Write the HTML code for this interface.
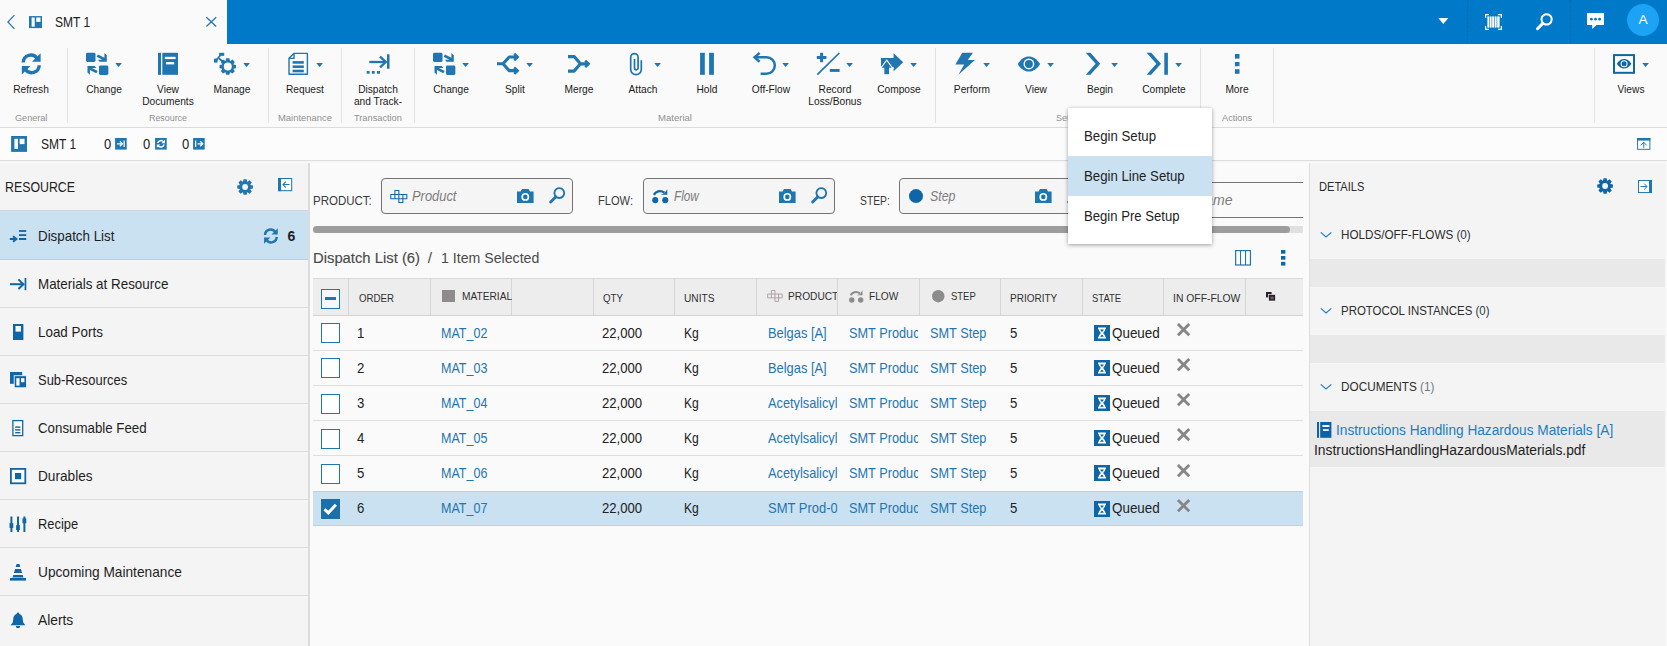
<!DOCTYPE html>
<html><head><meta charset="utf-8"><title>SMT 1</title>
<style>
*{box-sizing:border-box;margin:0;padding:0}
html,body{width:1667px;height:646px;overflow:hidden;background:#fafafa;font-family:"Liberation Sans",sans-serif;color:#222}
.a,.i,.t{position:absolute}
.t{white-space:nowrap;line-height:1}
.i{display:block;overflow:visible;fill:currentColor}
</style></head><body>

<div class="a" style="left:0px;top:0px;width:1667px;height:44px;background:#0079c9;"></div>
<div class="a" style="left:0px;top:0px;width:227px;height:44px;background:#fafafa;"></div>
<svg class="i" style="left:7px;top:14px;width:8.2px;height:16px;color:#1f76b0;" viewBox="0 0 9 16"><path d="M8.2 0.4 L1 8 L8.2 15.6" fill="none" stroke="currentColor" stroke-width="1.3" /></svg>
<svg class="i" style="left:28.8px;top:15.8px;width:13px;height:12.2px;color:#1f76b0;" viewBox="0 0 13 12"><rect x="0" y="0" width="13" height="12" rx="0" /><rect x="2.6" y="1.4" width="3.1" height="9.2" rx="0" fill="#fff"/><rect x="7.2" y="1.4" width="4.3" height="4.4" rx="0" fill="#fff"/></svg>
<div class="t" style="left:55.1px;top:14.98px;font-size:14.2px;color:#222;transform:scaleX(0.849);transform-origin:0 0;">SMT 1</div>
<svg class="i" style="left:205.5px;top:17.2px;width:10.6px;height:9.8px;color:#1f76b0;" viewBox="0 0 11 10"><path d="M0.4 0.2 L10.6 9.8 M10.6 0.2 L0.4 9.8" fill="none" stroke="currentColor" stroke-width="1.3" /></svg>
<svg class="i" style="left:1437.8px;top:17.8px;width:10.6px;height:6px;color:#fff;" viewBox="0 0 10 6"><path d="M0 0 H10 L5 6Z" /></svg>
<div class="a" style="left:1467px;top:0;width:0;height:44px;border-left:1px dotted #0a62a3"></div>
<div class="a" style="left:1570px;top:0;width:0;height:44px;border-left:1px dotted #0a62a3"></div>
<svg class="i" style="left:1485.2px;top:14px;width:17px;height:16px;color:#fff;" viewBox="0 0 17 16"><path d="M0.6 4 V0.6 H4 M13 0.6 H16.4 V4 M16.4 12 V15.4 H13 M4 15.4 H0.6 V12" fill="none" stroke="currentColor" stroke-width="1.2" /><rect x="2.4" y="2.4" width="2" height="11.2" rx="0" /><rect x="5" y="2.4" width="1.6" height="11.2" rx="0" /><rect x="7.2" y="2.4" width="2.2" height="11.2" rx="0" /><rect x="10" y="2.4" width="1.6" height="11.2" rx="0" /><rect x="12.2" y="2.4" width="2.4" height="11.2" rx="0" /></svg>
<svg class="i" style="left:1536px;top:13.4px;width:17px;height:17px;color:#fff;" viewBox="0 0 17 17"><path d="M10.6 1.2 a5.2 5.2 0 1 0 0.01 0Z" fill="none" stroke="currentColor" stroke-width="2" /><path d="M6.8 10.4 L1.5 15.7" fill="none" stroke="currentColor" stroke-width="3" stroke-linecap="round"/></svg>
<svg class="i" style="left:1586.7px;top:13px;width:17px;height:16px;color:#fff;" viewBox="0 0 17 16"><path d="M0 0 H17 V12 H9.5 L5.2 16 V12 H0Z" /><circle cx="4.4" cy="6.2" r="1.4" fill="#0079c9"/><circle cx="8.5" cy="6.2" r="1.4" fill="#0079c9"/><circle cx="12.6" cy="6.2" r="1.4" fill="#0079c9"/></svg>
<div class="a" style="left:1627px;top:3.7px;width:32px;height:32px;background:#1ca3f6;border-radius:50%"></div>
<div class="t" style="left:1638.56px;top:12.99px;font-size:13.6px;color:#fff;">A</div>
<div class="a" style="left:0px;top:44px;width:1667px;height:83px;background:#fafafa;"></div>
<div class="a" style="left:0px;top:127px;width:1667px;height:1px;background:#dcdcdc;"></div>
<div class="a" style="left:67px;top:48px;width:1px;height:75px;background:#e2e2e2;"></div>
<div class="a" style="left:268px;top:48px;width:1px;height:75px;background:#e2e2e2;"></div>
<div class="a" style="left:341px;top:48px;width:1px;height:75px;background:#e2e2e2;"></div>
<div class="a" style="left:414px;top:48px;width:1px;height:75px;background:#e2e2e2;"></div>
<div class="a" style="left:935px;top:48px;width:1px;height:75px;background:#e2e2e2;"></div>
<div class="a" style="left:1200px;top:48px;width:1px;height:75px;background:#e2e2e2;"></div>
<div class="a" style="left:1273px;top:48px;width:1px;height:75px;background:#e2e2e2;"></div>
<div class="a" style="left:1594px;top:48px;width:1px;height:75px;background:#e2e2e2;"></div>
<svg class="i" style="left:19px;top:52px;width:24px;height:24px;color:#1f76b0;" viewBox="0 0 24 24"><path d="M4.2 10.6 A7.6 7.6 0 0 1 18.2 6.6" fill="none" stroke="currentColor" stroke-width="3.3" /><path d="M21.6 1.2 V9.8 H13Z" /><path d="M20.2 13.2 A7.6 7.6 0 0 1 6.2 17.2" fill="none" stroke="currentColor" stroke-width="3.3" /><path d="M2.8 22.6 V14 H11.4Z" /></svg>
<div class="t" style="left:13.14px;top:85.17px;font-size:10.2px;color:#1a1a1a;">Refresh</div>
<svg class="i" style="left:86px;top:52px;width:24px;height:24px;color:#1f76b0;" viewBox="0 0 24 24"><rect x="0" y="0.8" width="9.5" height="9.1" rx="1.4" /><rect x="12.95" y="13.6" width="9.4" height="9.3" rx="1.4" /><path d="M18.40 1.00 L20.80 3.20 L20.80 9.70 L13.60 9.70 L12.00 7.70 L16.40 7.70 L10.60 4.80 L12.00 2.50 L18.40 5.80Z" /><path d="M3.90 22.70 L1.50 20.50 L1.50 14.00 L8.70 14.00 L10.30 16.00 L5.90 16.00 L11.70 18.90 L10.30 21.20 L3.90 17.90Z" /></svg>
<svg class="i" style="left:114.7px;top:63px;width:7.2px;height:4px;color:#1f76b0;" viewBox="0 0 10 6"><path d="M0 0 H10 L5 6Z" /></svg>
<div class="t" style="left:86.13px;top:85.17px;font-size:10.2px;color:#1a1a1a;">Change</div>
<svg class="i" style="left:156px;top:52px;width:24px;height:24px;color:#1f76b0;" viewBox="0 0 24 24"><rect x="2" y="0.8" width="3" height="22" rx="0" /><rect x="6.3" y="0.8" width="15.7" height="22" rx="0" /><rect x="8.8" y="4.8" width="10.8" height="2.3" rx="0" fill="#fff"/><rect x="10" y="10" width="8.2" height="2.4" rx="0" fill="#fff"/></svg>
<div class="t" style="left:157.04px;top:85.17px;font-size:10.2px;color:#1a1a1a;">View</div>
<div class="t" style="left:142.21px;top:97.17px;font-size:10.2px;color:#1a1a1a;">Documents</div>
<svg class="i" style="left:214px;top:52px;width:24px;height:24px;color:#1f76b0;" viewBox="0 0 24 24"><path d="M19.48 12.38 L22.04 12.96 L22.04 16.24 L19.48 16.82 L19.39 17.04 L20.78 19.27 L18.47 21.58 L16.24 20.19 L16.02 20.28 L15.44 22.84 L12.16 22.84 L11.58 20.28 L11.36 20.19 L9.13 21.58 L6.82 19.27 L8.21 17.04 L8.12 16.82 L5.56 16.24 L5.56 12.96 L8.12 12.38 L8.21 12.16 L6.82 9.93 L9.13 7.62 L11.36 9.01 L11.58 8.92 L12.16 6.36 L15.44 6.36 L16.02 8.92 L16.24 9.01 L18.47 7.62 L20.78 9.93 L19.39 12.16Z M9.80 14.60 a4.0 4.0 0 1 0 8.0 0 a4.0 4.0 0 1 0 -8.0 0Z" fill-rule="evenodd"/><rect x="5.2" y="0.8" width="5" height="3" rx="0" /><rect x="0" y="6.6" width="3.6" height="4" rx="0" /><path d="M7 2.5 L2 8.5" fill="none" stroke="currentColor" stroke-width="1.8" /><path d="M5 6.5 L8.8 9.8" fill="none" stroke="currentColor" stroke-width="1.8" /></svg>
<svg class="i" style="left:242.7px;top:63px;width:7.2px;height:4px;color:#1f76b0;" viewBox="0 0 10 6"><path d="M0 0 H10 L5 6Z" /></svg>
<div class="t" style="left:213.57px;top:85.17px;font-size:10.2px;color:#1a1a1a;">Manage</div>
<svg class="i" style="left:287px;top:52px;width:24px;height:24px;color:#1f76b0;" viewBox="0 0 24 24"><path d="M6.8 1.4 H20.4 V22.2 H2 V6.2 Z M7 1.6 V6.4 H2.2" fill="none" stroke="currentColor" stroke-width="1.4" stroke-linejoin="round"/><rect x="5.6" y="9.1" width="11.2" height="2.6" rx="0" /><rect x="5.6" y="13.4" width="11.2" height="2.6" rx="0" /><rect x="5.6" y="17.7" width="11.2" height="2.6" rx="0" /></svg>
<svg class="i" style="left:315.7px;top:63px;width:7.2px;height:4px;color:#1f76b0;" viewBox="0 0 10 6"><path d="M0 0 H10 L5 6Z" /></svg>
<div class="t" style="left:286px;top:85.17px;font-size:10.2px;color:#1a1a1a;">Request</div>
<svg class="i" style="left:366px;top:52px;width:24px;height:24px;color:#1f76b0;" viewBox="0 0 24 24"><path d="M3.3 10 H19.5" fill="none" stroke="currentColor" stroke-width="2.3" /><path d="M14 4.6 L19.8 10 L14 15.4" fill="none" stroke="currentColor" stroke-width="2.3" /><rect x="21" y="2.3" width="2.5" height="14.4" rx="0" /><rect x="0.7" y="19" width="2.9" height="2.7" rx="0" /><rect x="5.8" y="19" width="2.9" height="2.7" rx="0" /><rect x="10.9" y="19" width="3.1" height="2.7" rx="0" /></svg>
<div class="t" style="left:358.16px;top:85.17px;font-size:10.2px;color:#1a1a1a;">Dispatch</div>
<div class="t" style="left:353.91px;top:97.17px;font-size:10.2px;color:#1a1a1a;">and Track-</div>
<svg class="i" style="left:433px;top:52px;width:24px;height:24px;color:#1f76b0;" viewBox="0 0 24 24"><rect x="0" y="0.8" width="9.5" height="9.1" rx="1.4" /><rect x="12.95" y="13.6" width="9.4" height="9.3" rx="1.4" /><path d="M18.40 1.00 L20.80 3.20 L20.80 9.70 L13.60 9.70 L12.00 7.70 L16.40 7.70 L10.60 4.80 L12.00 2.50 L18.40 5.80Z" /><path d="M3.90 22.70 L1.50 20.50 L1.50 14.00 L8.70 14.00 L10.30 16.00 L5.90 16.00 L11.70 18.90 L10.30 21.20 L3.90 17.90Z" /></svg>
<svg class="i" style="left:461.7px;top:63px;width:7.2px;height:4px;color:#1f76b0;" viewBox="0 0 10 6"><path d="M0 0 H10 L5 6Z" /></svg>
<div class="t" style="left:433.13px;top:85.17px;font-size:10.2px;color:#1a1a1a;">Change</div>
<svg class="i" style="left:497px;top:52px;width:24px;height:24px;color:#1f76b0;" viewBox="0 0 24 24"><path d="M0 11.8 H6 L12.2 4.95 H20.6 M6 11.8 L12.2 18.65 H20.6" fill="none" stroke="currentColor" stroke-width="3.1" stroke-linejoin="round"/><path d="M17.2 1.7 L20.6 4.95 L17.2 8.2 M17.2 15.4 L20.6 18.65 L17.2 21.9" fill="none" stroke="currentColor" stroke-width="2.6" /></svg>
<svg class="i" style="left:525.7px;top:63px;width:7.2px;height:4px;color:#1f76b0;" viewBox="0 0 10 6"><path d="M0 0 H10 L5 6Z" /></svg>
<div class="t" style="left:505.08px;top:85.17px;font-size:10.2px;color:#1a1a1a;">Split</div>
<svg class="i" style="left:567px;top:52px;width:24px;height:24px;color:#1f76b0;" viewBox="0 0 24 24"><path d="M1 4.6 H7.2 L13.4 11.85 H21.6 M1 19.1 H7.2 L13.4 11.85" fill="none" stroke="currentColor" stroke-width="3.1" stroke-linejoin="round"/><path d="M18.2 8.6 L21.6 11.85 L18.2 15.1" fill="none" stroke="currentColor" stroke-width="2.6" /></svg>
<div class="t" style="left:564.54px;top:85.17px;font-size:10.2px;color:#1a1a1a;">Merge</div>
<svg class="i" style="left:625px;top:52px;width:24px;height:24px;color:#1f76b0;" viewBox="0 0 24 24"><path d="M16.3 8.2 V17.4 A5.3 5.3 0 0 1 5.7 17.4 V5.3 A3.7 3.7 0 0 1 13.1 5.3 V16 A1.8 1.8 0 0 1 9.5 16 V7" fill="none" stroke="currentColor" stroke-width="1.7" /></svg>
<svg class="i" style="left:653.7px;top:63px;width:7.2px;height:4px;color:#1f76b0;" viewBox="0 0 10 6"><path d="M0 0 H10 L5 6Z" /></svg>
<div class="t" style="left:628.54px;top:85.17px;font-size:10.2px;color:#1a1a1a;">Attach</div>
<svg class="i" style="left:695px;top:52px;width:24px;height:24px;color:#1f76b0;" viewBox="0 0 24 24"><rect x="5.1" y="0.8" width="4.7" height="22" rx="0" /><rect x="14.1" y="0.8" width="4.8" height="22" rx="0" /></svg>
<div class="t" style="left:696.51px;top:85.17px;font-size:10.2px;color:#1a1a1a;">Hold</div>
<svg class="i" style="left:753px;top:52px;width:24px;height:24px;color:#1f76b0;" viewBox="0 0 24 24"><path d="M1.4 5.3 H13.6 A8.2 8.2 0 0 1 13.6 21.7 H7.6" fill="none" stroke="currentColor" stroke-width="2.5" /><path d="M6.6 0.9 L1.6 5.3 L6.6 9.7" fill="none" stroke="currentColor" stroke-width="2.5" /></svg>
<svg class="i" style="left:781.7px;top:63px;width:7.2px;height:4px;color:#1f76b0;" viewBox="0 0 10 6"><path d="M0 0 H10 L5 6Z" /></svg>
<div class="t" style="left:751.82px;top:85.17px;font-size:10.2px;color:#1a1a1a;">Off-Flow</div>
<svg class="i" style="left:817px;top:52px;width:24px;height:24px;color:#1f76b0;" viewBox="0 0 24 24"><rect x="-0.2" y="4" width="9.6" height="3" rx="0" /><rect x="3.1" y="0.8" width="3" height="9.4" rx="0" /><path d="M0.3 22.6 L22.3 1" fill="none" stroke="currentColor" stroke-width="1.7" /><rect x="12.8" y="17" width="9.8" height="2.9" rx="0" /></svg>
<svg class="i" style="left:845.7px;top:63px;width:7.2px;height:4px;color:#1f76b0;" viewBox="0 0 10 6"><path d="M0 0 H10 L5 6Z" /></svg>
<div class="t" style="left:818.56px;top:85.17px;font-size:10.2px;color:#1a1a1a;">Record</div>
<div class="t" style="left:808.35px;top:97.17px;font-size:10.2px;color:#1a1a1a;">Loss/Bonus</div>
<svg class="i" style="left:881px;top:52px;width:24px;height:24px;color:#1f76b0;" viewBox="0 0 24 24"><path d="M0 5.9 H12.6 V1.2 L22.2 10.2 L12.6 19.2 V14.9 H0Z" /><path d="M5.7 8.2 L11.8 16.4 H8.6 V22.8 H2.8 V16.4 H-0.4Z" stroke="#fafafa" stroke-width="1.1"/></svg>
<svg class="i" style="left:909.7px;top:63px;width:7.2px;height:4px;color:#1f76b0;" viewBox="0 0 10 6"><path d="M0 0 H10 L5 6Z" /></svg>
<div class="t" style="left:877.17px;top:85.17px;font-size:10.2px;color:#1a1a1a;">Compose</div>
<svg class="i" style="left:954px;top:52px;width:24px;height:24px;color:#1f76b0;" viewBox="0 0 24 24"><path d="M8.2 0.8 H18.9 L13.8 8 H20.9 L4.4 22.8 L10.2 12.4 H1.4Z" /></svg>
<svg class="i" style="left:982.7px;top:63px;width:7.2px;height:4px;color:#1f76b0;" viewBox="0 0 10 6"><path d="M0 0 H10 L5 6Z" /></svg>
<div class="t" style="left:953.86px;top:85.17px;font-size:10.2px;color:#1a1a1a;">Perform</div>
<svg class="i" style="left:1018px;top:52px;width:24px;height:24px;color:#1f76b0;" viewBox="0 0 24 24"><path d="M-0.3 12 C3 6.6 7 4.4 10.9 4.4 C14.8 4.4 18.8 6.6 22.1 12 C18.8 17.4 14.8 19.6 10.9 19.6 C7 19.6 3 17.4 -0.3 12Z" /><circle cx="10.9" cy="12" r="5.4" fill="#fff"/><circle cx="10.9" cy="12" r="4" /></svg>
<svg class="i" style="left:1046.7px;top:63px;width:7.2px;height:4px;color:#1f76b0;" viewBox="0 0 10 6"><path d="M0 0 H10 L5 6Z" /></svg>
<div class="t" style="left:1025.04px;top:85.17px;font-size:10.2px;color:#1a1a1a;">View</div>
<svg class="i" style="left:1082px;top:52px;width:24px;height:24px;color:#1f76b0;" viewBox="0 0 24 24"><path d="M3.8 0.8 H8.4 L18.2 11.8 L8.4 22.8 H3.8 L13.6 11.8Z" /></svg>
<svg class="i" style="left:1110.7px;top:63px;width:7.2px;height:4px;color:#1f76b0;" viewBox="0 0 10 6"><path d="M0 0 H10 L5 6Z" /></svg>
<div class="t" style="left:1086.96px;top:85.17px;font-size:10.2px;color:#1a1a1a;">Begin</div>
<svg class="i" style="left:1146px;top:52px;width:24px;height:24px;color:#1f76b0;" viewBox="0 0 24 24"><path d="M0.6 0.8 H5.2 L15 11.8 L5.2 22.8 H0.6 L10.4 11.8Z" /><rect x="18.3" y="0.8" width="3.6" height="22" rx="0" /></svg>
<svg class="i" style="left:1174.7px;top:63px;width:7.2px;height:4px;color:#1f76b0;" viewBox="0 0 10 6"><path d="M0 0 H10 L5 6Z" /></svg>
<div class="t" style="left:1142.17px;top:85.17px;font-size:10.2px;color:#1a1a1a;">Complete</div>
<svg class="i" style="left:1225px;top:52px;width:24px;height:24px;color:#1f76b0;" viewBox="0 0 24 24"><rect x="9.9" y="2" width="4.6" height="4.6" rx="0" /><rect x="9.9" y="10" width="4.6" height="4.2" rx="0" /><rect x="9.9" y="17.2" width="4.6" height="4.6" rx="0" /></svg>
<div class="t" style="left:1225.38px;top:85.17px;font-size:10.2px;color:#1a1a1a;">More</div>
<svg class="i" style="left:1613px;top:52px;width:24px;height:24px;color:#0f66a6;" viewBox="0 0 24 24"><rect x="1" y="3.1" width="20" height="17.7" rx="0" fill="#fff" stroke="currentColor" stroke-width="2"/><path d="M3.8 11.8 C6 8.4 8.6 7 11.1 7 C13.6 7 16.2 8.4 18.4 11.8 C16.2 15.2 13.6 16.6 11.1 16.6 C8.6 16.6 6 15.2 3.8 11.8Z" /><circle cx="11.1" cy="11.8" r="3.5" fill="#fff"/><circle cx="11.1" cy="11.8" r="2.5" /></svg>
<svg class="i" style="left:1641.7px;top:63px;width:7.2px;height:4px;color:#1f76b0;" viewBox="0 0 10 6"><path d="M0 0 H10 L5 6Z" /></svg>
<div class="t" style="left:1617.49px;top:85.17px;font-size:10.2px;color:#1a1a1a;">Views</div>
<div class="t" style="left:14.8px;top:112.67px;font-size:9.6px;color:#909090;transform:scaleX(0.949);transform-origin:0 0;">General</div>
<div class="t" style="left:149px;top:112.67px;font-size:9.6px;color:#909090;transform:scaleX(0.925);transform-origin:0 0;">Resource</div>
<div class="t" style="left:278px;top:112.67px;font-size:9.6px;color:#909090;transform:scaleX(0.982);transform-origin:0 0;">Maintenance</div>
<div class="t" style="left:354.05px;top:112.67px;font-size:9.6px;color:#909090;transform:scaleX(0.962);transform-origin:0 0;">Transaction</div>
<div class="t" style="left:658px;top:112.67px;font-size:9.6px;color:#909090;transform:scaleX(0.996);transform-origin:0 0;">Material</div>
<div class="t" style="left:1056.21px;top:112.67px;font-size:9.6px;color:#909090;transform:scaleX(0.940);transform-origin:0 0;">Setup</div>
<div class="t" style="left:1221.9px;top:112.67px;font-size:9.6px;color:#909090;transform:scaleX(0.959);transform-origin:0 0;">Actions</div>
<div class="a" style="left:0px;top:128px;width:1667px;height:32px;background:#fcfcfc;"></div>
<div class="a" style="left:0px;top:160px;width:1667px;height:1px;background:#dedede;"></div>
<div class="a" style="left:0px;top:161px;width:1667px;height:1px;background:#f4f4f4;"></div>
<svg class="i" style="left:10.9px;top:136px;width:16.1px;height:15.9px;color:#1f76b0;" viewBox="0 0 16 16"><rect x="0" y="0" width="16" height="16" rx="0" /><rect x="3.3" y="2.8" width="3.6" height="10.2" rx="0" fill="#fff"/><rect x="8.6" y="2.8" width="4.9" height="5.4" rx="0" fill="#fff"/></svg>
<div class="t" style="left:41.2px;top:137.15px;font-size:14px;color:#222;transform:scaleX(0.857);transform-origin:0 0;">SMT 1</div>
<div class="t" style="left:103.8px;top:137.15px;font-size:14px;color:#222;transform:scaleX(0.930);transform-origin:0 0;">0</div>
<svg class="i" style="left:115.2px;top:137.9px;width:11.8px;height:11.6px;color:#1f76b0;" viewBox="0 0 12 12"><rect x="0" y="0" width="12" height="12" rx="0" /><path d="M2 6 H7.2 M5 3.4 L7.6 6 L5 8.6 M9.4 2.6 V9.4" fill="none"  stroke-width="1.3" stroke="#fff"/></svg>
<div class="t" style="left:143.1px;top:137.15px;font-size:14px;color:#222;transform:scaleX(0.930);transform-origin:0 0;">0</div>
<svg class="i" style="left:154.6px;top:137.9px;width:11.8px;height:11.6px;color:#1f76b0;" viewBox="0 0 12 12"><rect x="0" y="0" width="12" height="12" rx="0" /><path d="M2.6 5.2 A3.6 3.6 0 0 1 8.8 4 M9.4 6.8 A3.6 3.6 0 0 1 3.2 8" fill="none"  stroke-width="1.5" stroke="#fff"/><path d="M10.2 1.8 V5.4 H6.6Z M1.8 10.2 V6.6 H5.4Z" fill="#fff"/></svg>
<div class="t" style="left:181.9px;top:137.15px;font-size:14px;color:#222;transform:scaleX(0.930);transform-origin:0 0;">0</div>
<svg class="i" style="left:193.3px;top:137.9px;width:11.8px;height:11.6px;color:#1f76b0;" viewBox="0 0 12 12"><rect x="0" y="0" width="12" height="12" rx="0" /><path d="M2.6 2.6 V9.4 M4.6 6 H9.6 M7.4 3.4 L10 6 L7.4 8.6" fill="none"  stroke-width="1.3" stroke="#fff"/></svg>
<svg class="i" style="left:1636.5px;top:138px;width:13.5px;height:11.8px;color:#1f76b0;" viewBox="0 0 13.5 12"><rect x="0.5" y="0.5" width="12.5" height="11" rx="0" fill="#fff" stroke="currentColor" stroke-width="1"/><rect x="0" y="0" width="13.5" height="2.6" rx="0" /><path d="M6.75 10 V4.6 M3.8 7.4 L6.75 4.4 L9.7 7.4" fill="none" stroke="currentColor" stroke-width="1" /></svg>
<div class="a" style="left:0px;top:162.5px;width:308.2px;height:484px;background:#f4f4f4;"></div>
<div class="a" style="left:308.2px;top:162.5px;width:1.5px;height:484px;background:#dcdcdc;"></div>
<div class="t" style="left:5.3px;top:179.81px;font-size:14.4px;color:#222;transform:scaleX(0.858);transform-origin:0 0;">RESOURCE</div>
<svg class="i" style="left:237px;top:179px;width:16.2px;height:16px;color:#1f76b0;" viewBox="0 0 16 16"><path d="M13.31 5.92 L15.85 6.44 L15.85 9.56 L13.31 10.08 L13.22 10.28 L14.65 12.44 L12.44 14.65 L10.28 13.22 L10.08 13.31 L9.56 15.85 L6.44 15.85 L5.92 13.31 L5.72 13.22 L3.56 14.65 L1.35 12.44 L2.78 10.28 L2.69 10.08 L0.15 9.56 L0.15 6.44 L2.69 5.92 L2.78 5.72 L1.35 3.56 L3.56 1.35 L5.72 2.78 L5.92 2.69 L6.44 0.15 L9.56 0.15 L10.08 2.69 L10.28 2.78 L12.44 1.35 L14.65 3.56 L13.22 5.72Z M5.10 8.00 a2.9 2.9 0 1 0 5.8 0 a2.9 2.9 0 1 0 -5.8 0Z" fill-rule="evenodd"/></svg>
<svg class="i" style="left:278px;top:178.2px;width:14.2px;height:13.2px;color:#1f76b0;" viewBox="0 0 14 13"><rect x="0.5" y="0.5" width="13" height="12" rx="0" fill="#fff" stroke="currentColor" stroke-width="1"/><rect x="0" y="0" width="3" height="13" rx="0" /><path d="M11.4 6.5 H5 M7.8 3.6 L4.9 6.5 L7.8 9.4" fill="none" stroke="currentColor" stroke-width="1" /></svg>
<div class="a" style="left:0px;top:210px;width:308.2px;height:1px;background:#d6d6d6;"></div>
<div class="a" style="left:0px;top:211px;width:308.2px;height:48px;background:#cae1f2;"></div>
<div class="a" style="left:0px;top:259px;width:308.2px;height:1px;background:#b9d0e0;"></div>
<div class="t" style="left:38.2px;top:229.18px;font-size:14.2px;color:#1e1e1e;transform:scaleX(0.941);transform-origin:0 0;">Dispatch List</div>
<svg class="i" style="left:9px;top:228px;width:18px;height:16px;color:#0f66a6;" viewBox="0 0 18 16"><rect x="10" y="2.1" width="7.2" height="1.8" rx="0" /><rect x="10" y="6.2" width="7.2" height="1.8" rx="0" /><rect x="10" y="10" width="7.2" height="2" rx="0" /><path d="M0.8 11 H7.4" fill="none" stroke="currentColor" stroke-width="2" /><path d="M4.6 7.6 L9 11 L4.6 14.4 L3.4 13 L5.8 11 L3.4 9Z" /></svg>
<div class="a" style="left:0px;top:307px;width:308.2px;height:1px;background:#dcdcdc;"></div>
<div class="t" style="left:38.2px;top:277.18px;font-size:14.2px;color:#1e1e1e;transform:scaleX(0.945);transform-origin:0 0;">Materials at Resource</div>
<svg class="i" style="left:9px;top:276px;width:18px;height:16px;color:#0f66a6;" viewBox="0 0 18 16"><path d="M1 8.2 H14" fill="none" stroke="currentColor" stroke-width="2" /><path d="M9.4 3.4 L14.4 8.2 L9.4 13" fill="none" stroke="currentColor" stroke-width="2" /><rect x="15.6" y="2" width="1.7" height="12.2" rx="0" /></svg>
<div class="a" style="left:0px;top:355px;width:308.2px;height:1px;background:#dcdcdc;"></div>
<div class="t" style="left:38.2px;top:325.18px;font-size:14.2px;color:#1e1e1e;transform:scaleX(0.945);transform-origin:0 0;">Load Ports</div>
<svg class="i" style="left:9px;top:324px;width:18px;height:16px;color:#0f66a6;" viewBox="0 0 18 16"><rect x="4" y="0" width="10.4" height="16" rx="0" /><rect x="6.5" y="2" width="5.4" height="5.6" rx="0" fill="#fff"/></svg>
<div class="a" style="left:0px;top:403px;width:308.2px;height:1px;background:#dcdcdc;"></div>
<div class="t" style="left:38.2px;top:373.18px;font-size:14.2px;color:#1e1e1e;transform:scaleX(0.912);transform-origin:0 0;">Sub-Resources</div>
<svg class="i" style="left:9px;top:372px;width:18px;height:16px;color:#0f66a6;" viewBox="0 0 18 16"><rect x="1" y="0" width="12.2" height="11.8" rx="0" /><rect x="5.2" y="3.7" width="12.3" height="12.1" rx="0" stroke="#f4f4f4" stroke-width="0.9"/><rect x="7.3" y="6.2" width="3.2" height="7.4" rx="0" fill="#fff"/><rect x="12" y="6.2" width="3.4" height="4" rx="0" fill="#fff"/></svg>
<div class="a" style="left:0px;top:451px;width:308.2px;height:1px;background:#dcdcdc;"></div>
<div class="t" style="left:38.2px;top:421.18px;font-size:14.2px;color:#1e1e1e;transform:scaleX(0.937);transform-origin:0 0;">Consumable Feed</div>
<svg class="i" style="left:9px;top:420px;width:18px;height:16px;color:#0f66a6;" viewBox="0 0 18 16"><rect x="3.9" y="0.6" width="9.8" height="15" rx="0" fill="#fff" stroke="currentColor" stroke-width="1.3"/><rect x="6.2" y="6.4" width="5.2" height="1.4" rx="0" /><rect x="6.2" y="9.2" width="5.2" height="1.4" rx="0" /><rect x="6.2" y="12" width="5.2" height="1.4" rx="0" /></svg>
<div class="a" style="left:0px;top:499px;width:308.2px;height:1px;background:#dcdcdc;"></div>
<div class="t" style="left:38.2px;top:469.18px;font-size:14.2px;color:#1e1e1e;transform:scaleX(0.961);transform-origin:0 0;">Durables</div>
<svg class="i" style="left:9px;top:468px;width:18px;height:16px;color:#0f66a6;" viewBox="0 0 18 16"><rect x="1.9" y="0.9" width="14.4" height="14.4" rx="0" fill="#fff" stroke="currentColor" stroke-width="1.8"/><rect x="6" y="5" width="6.2" height="6.2" rx="0" /></svg>
<div class="a" style="left:0px;top:547px;width:308.2px;height:1px;background:#dcdcdc;"></div>
<div class="t" style="left:38.2px;top:517.18px;font-size:14.2px;color:#1e1e1e;transform:scaleX(0.909);transform-origin:0 0;">Recipe</div>
<svg class="i" style="left:9px;top:516px;width:18px;height:16px;color:#0f66a6;" viewBox="0 0 18 16"><path d="M2.4 0.4 V16 M9 0.4 V16 M15.4 0.4 V16" fill="none" stroke="currentColor" stroke-width="2" /><rect x="0.5" y="7.2" width="3.8" height="4.8" rx="0" /><rect x="7.1" y="9.2" width="3.8" height="4.8" rx="0" /><rect x="13.5" y="2.4" width="3.8" height="4.8" rx="0" /></svg>
<div class="a" style="left:0px;top:595px;width:308.2px;height:1px;background:#dcdcdc;"></div>
<div class="t" style="left:38.2px;top:565.18px;font-size:14.2px;color:#1e1e1e;transform:scaleX(0.965);transform-origin:0 0;">Upcoming Maintenance</div>
<svg class="i" style="left:9px;top:564px;width:18px;height:16px;color:#0f66a6;" viewBox="0 0 18 16"><path d="M7.6 0 H10.4 L11.3 3 H6.7Z M6.1 5 H11.9 L13.1 9 H4.9Z M4.3 11 H13.7 L14.5 13.6 H3.5Z" /><rect x="1" y="14" width="16" height="2.6" rx="0" /></svg>
<div class="t" style="left:38.2px;top:613.18px;font-size:14.2px;color:#1e1e1e;transform:scaleX(0.970);transform-origin:0 0;">Alerts</div>
<svg class="i" style="left:9px;top:612px;width:18px;height:16px;color:#0f66a6;" viewBox="0 0 18 16"><path d="M9 0.4 C9.8 0.4 10.2 1 10.2 1.7 C12.8 2.6 13.8 4.8 13.8 7.6 C13.8 10.4 14.8 11.8 16.4 13.2 H1.6 C3.2 11.8 4.2 10.4 4.2 7.6 C4.2 4.8 5.2 2.6 7.8 1.7 C7.8 1 8.2 0.4 9 0.4Z M6.8 14 H11.2 A2.2 2.2 0 0 1 6.8 14Z" /></svg>
<svg class="i" style="left:261.5px;top:227px;width:17.5px;height:18px;color:#1f76b0;" viewBox="0 0 24 24"><path d="M4.2 10.6 A7.6 7.6 0 0 1 18.2 6.6" fill="none" stroke="currentColor" stroke-width="3.3" /><path d="M21.6 1.2 V9.8 H13Z" /><path d="M20.2 13.2 A7.6 7.6 0 0 1 6.2 17.2" fill="none" stroke="currentColor" stroke-width="3.3" /><path d="M2.8 22.6 V14 H11.4Z" /></svg>
<div class="t" style="left:287.6px;top:229.15px;font-size:14px;color:#1e1e1e;font-weight:bold;">6</div>
<div class="t" style="left:313.2px;top:194.3px;font-size:13px;color:#3a3a3a;transform:scaleX(0.885);transform-origin:0 0;">PRODUCT:</div>
<div class="a" style="left:381.2px;top:178px;width:192px;height:36px;background:#f5f5f5;border:1px solid #747474;border-radius:4px"></div>
<svg class="i" style="left:389.5px;top:189.6px;width:17.6px;height:13px;color:#0f66a6;" viewBox="0 0 17.3 13.2"><path d="M0.5 4.5 H16.8 V8.8 H0.5Z M4.7 8.8 V0.5 H8.7 V8.8 M8.7 8.8 V12.7 H12.8 V4.5" fill="none" stroke="currentColor" stroke-width="1.05" /></svg>
<div class="t" style="left:412.4px;top:188.88px;font-size:14.2px;color:#7d7d7d;font-style:italic;transform:scaleX(0.909);transform-origin:0 0;">Product</div>
<svg class="i" style="left:516.7px;top:189px;width:16.6px;height:14px;color:#1f76b0;" viewBox="0 0 16.6 14"><path d="M0 2.6 H3.6 L5 0 H11.6 L13 2.6 H16.6 V14 H0Z" /><circle cx="8.3" cy="7.9" r="3.9" fill="#fff"/><circle cx="8.3" cy="7.9" r="2.3" /></svg>
<svg class="i" style="left:548.6px;top:187px;width:16.6px;height:16.2px;color:#1f76b0;" viewBox="0 0 17 17"><path d="M10.6 1.2 a5.2 5.2 0 1 0 0.01 0Z" fill="none" stroke="currentColor" stroke-width="2" /><path d="M6.8 10.4 L1.5 15.7" fill="none" stroke="currentColor" stroke-width="3" stroke-linecap="round"/></svg>
<div class="t" style="left:598.3px;top:194.3px;font-size:13px;color:#3a3a3a;transform:scaleX(0.855);transform-origin:0 0;">FLOW:</div>
<div class="a" style="left:643.2px;top:178px;width:192px;height:36px;background:#f5f5f5;border:1px solid #747474;border-radius:4px"></div>
<svg class="i" style="left:651.5px;top:189px;width:16.4px;height:14.2px;color:#0f66a6;" viewBox="0 0 16.5 14.5"><circle cx="3.2" cy="11.4" r="3.1" /><circle cx="13.4" cy="11.4" r="3.1" /><path d="M1.8 6 C3.6 2.6 8.2 0.6 12.6 3.8" fill="none" stroke="currentColor" stroke-width="2.3" /><path d="M15.5 0.2 V6 H8.7 L12.6 4.4Z" /></svg>
<div class="t" style="left:674.4px;top:188.88px;font-size:14.2px;color:#7d7d7d;font-style:italic;transform:scaleX(0.827);transform-origin:0 0;">Flow</div>
<svg class="i" style="left:778.7px;top:189px;width:16.6px;height:14px;color:#1f76b0;" viewBox="0 0 16.6 14"><path d="M0 2.6 H3.6 L5 0 H11.6 L13 2.6 H16.6 V14 H0Z" /><circle cx="8.3" cy="7.9" r="3.9" fill="#fff"/><circle cx="8.3" cy="7.9" r="2.3" /></svg>
<svg class="i" style="left:810.6px;top:187px;width:16.6px;height:16.2px;color:#1f76b0;" viewBox="0 0 17 17"><path d="M10.6 1.2 a5.2 5.2 0 1 0 0.01 0Z" fill="none" stroke="currentColor" stroke-width="2" /><path d="M6.8 10.4 L1.5 15.7" fill="none" stroke="currentColor" stroke-width="3" stroke-linecap="round"/></svg>
<div class="t" style="left:860px;top:194.3px;font-size:13px;color:#3a3a3a;transform:scaleX(0.793);transform-origin:0 0;">STEP:</div>
<div class="a" style="left:899.1px;top:178px;width:192px;height:36px;background:#f5f5f5;border:1px solid #747474;border-radius:4px"></div>
<svg class="i" style="left:909.1px;top:189px;width:14px;height:14.2px;color:#0f66a6;" viewBox="0 0 14 14"><circle cx="7" cy="7" r="7" /></svg>
<div class="t" style="left:930.3px;top:188.88px;font-size:14.2px;color:#7d7d7d;font-style:italic;transform:scaleX(0.873);transform-origin:0 0;">Step</div>
<svg class="i" style="left:1034.6px;top:189px;width:16.6px;height:14px;color:#1f76b0;" viewBox="0 0 16.6 14"><path d="M0 2.6 H3.6 L5 0 H11.6 L13 2.6 H16.6 V14 H0Z" /><circle cx="8.3" cy="7.9" r="3.9" fill="#fff"/><circle cx="8.3" cy="7.9" r="2.3" /></svg>
<svg class="i" style="left:1066.5px;top:187px;width:16.6px;height:16.2px;color:#1f76b0;" viewBox="0 0 17 17"><path d="M10.6 1.2 a5.2 5.2 0 1 0 0.01 0Z" fill="none" stroke="currentColor" stroke-width="2" /><path d="M6.8 10.4 L1.5 15.7" fill="none" stroke="currentColor" stroke-width="3" stroke-linecap="round"/></svg>
<div class="t" style="left:1113px;top:194.3px;font-size:13px;color:#3a3a3a;transform:scaleX(0.923);transform-origin:0 0;">NAME:</div>
<div class="a" style="left:1160px;top:182px;width:143px;height:36px;background:transparent;border-top:1px solid #747474;border-bottom:1px solid #747474"></div>
<div class="t" style="left:1194.5px;top:192.98px;font-size:14.2px;color:#7d7d7d;font-style:italic;transform:scaleX(0.990);transform-origin:0 0;">Name</div>
<div class="a" style="left:313px;top:226.4px;width:990px;height:7px;background:#e0e0e0;border-radius:4px 0 0 4px"></div>
<div class="a" style="left:313px;top:226.4px;width:977px;height:7px;background:#9d9d9d;border-radius:4px"></div>
<div class="t" style="left:313.2px;top:250.05px;font-size:15.3px;color:#4a4a4a;transform:scaleX(0.968);transform-origin:0 0;-webkit-text-stroke:0.15px #4a4a4a;">Dispatch List (6)</div>
<div class="t" style="left:427.8px;top:250.05px;font-size:15.3px;color:#4a4a4a;">/</div>
<div class="t" style="left:441.2px;top:250.05px;font-size:15.3px;color:#4a4a4a;transform:scaleX(0.925);transform-origin:0 0;">1 Item Selected</div>
<svg class="i" style="left:1235px;top:250.2px;width:16.1px;height:15.6px;color:#1f76b0;" viewBox="0 0 16 15.6"><rect x="0.6" y="0.6" width="14.8" height="14.4" rx="0" fill="#fff" stroke="currentColor" stroke-width="1.2"/><path d="M5.5 0.6 V15 M10.5 0.6 V15" fill="none" stroke="currentColor" stroke-width="1.1" /></svg>
<svg class="i" style="left:1281px;top:250.2px;width:4.4px;height:15.6px;color:#0f66a6;" viewBox="0 0 4.4 15.6"><rect x="0" y="0" width="4.4" height="3.7" rx="0" /><rect x="0" y="6" width="4.4" height="3.7" rx="0" /><rect x="0" y="11.9" width="4.4" height="3.7" rx="0" /></svg>
<div class="a" style="left:313px;top:278px;width:990px;height:37.5px;background:#ededed;border-top:1px solid #d9d9d9;border-bottom:1px solid #d4d4d4"></div>
<div class="a" style="left:347.9px;top:279px;width:1px;height:36px;background:#d6d6d6;"></div>
<div class="a" style="left:430.1px;top:279px;width:1px;height:36px;background:#d6d6d6;"></div>
<div class="a" style="left:511.2px;top:279px;width:1px;height:36px;background:#d6d6d6;"></div>
<div class="a" style="left:592.9px;top:279px;width:1px;height:36px;background:#d6d6d6;"></div>
<div class="a" style="left:674.3px;top:279px;width:1px;height:36px;background:#d6d6d6;"></div>
<div class="a" style="left:756.2px;top:279px;width:1px;height:36px;background:#d6d6d6;"></div>
<div class="a" style="left:836.9px;top:279px;width:1px;height:36px;background:#d6d6d6;"></div>
<div class="a" style="left:918.7px;top:279px;width:1px;height:36px;background:#d6d6d6;"></div>
<div class="a" style="left:1000px;top:279px;width:1px;height:36px;background:#d6d6d6;"></div>
<div class="a" style="left:1081.7px;top:279px;width:1px;height:36px;background:#d6d6d6;"></div>
<div class="a" style="left:1163px;top:279px;width:1px;height:36px;background:#d6d6d6;"></div>
<div class="a" style="left:1244.9px;top:279px;width:1px;height:36px;background:#d6d6d6;"></div>
<div class="a" style="left:313px;top:490.8px;width:990px;height:35.4px;background:#cae1f2;border-top:1px solid #b4d3ea;border-bottom:1px solid #b4d3ea"></div>
<div class="a" style="left:313px;top:349.8px;width:990px;height:1px;background:#dedede;"></div>
<div class="a" style="left:313px;top:384.9px;width:990px;height:1px;background:#dedede;"></div>
<div class="a" style="left:313px;top:420px;width:990px;height:1px;background:#dedede;"></div>
<div class="a" style="left:313px;top:455.2px;width:990px;height:1px;background:#dedede;"></div>
<div class="a" style="left:321px;top:289px;width:19px;height:20px;background:#f6f9fc;border:1px solid #1f76b0"></div>
<div class="a" style="left:324.6px;top:297.3px;width:11.8px;height:3px;background:#1f76b0;"></div>
<div class="t" style="left:359px;top:293.35px;font-size:11.4px;color:#303030;transform:scaleX(0.850);transform-origin:0 0;">ORDER</div>
<div class="t" style="left:602.8px;top:293.35px;font-size:11.4px;color:#303030;transform:scaleX(0.853);transform-origin:0 0;">QTY</div>
<div class="t" style="left:684.3px;top:293.35px;font-size:11.4px;color:#303030;transform:scaleX(0.892);transform-origin:0 0;">UNITS</div>
<div class="t" style="left:1010px;top:293.35px;font-size:11.4px;color:#303030;transform:scaleX(0.879);transform-origin:0 0;">PRIORITY</div>
<div class="t" style="left:1091.8px;top:293.35px;font-size:11.4px;color:#303030;transform:scaleX(0.833);transform-origin:0 0;">STATE</div>
<div class="t" style="left:1172.8px;top:293.35px;font-size:11.4px;color:#303030;transform:scaleX(0.910);transform-origin:0 0;">IN OFF-FLOW</div>
<div class="t" style="left:869px;top:291.35px;font-size:11.4px;color:#303030;transform:scaleX(0.893);transform-origin:0 0;">FLOW</div>
<div class="t" style="left:950.7px;top:291.35px;font-size:11.4px;color:#303030;transform:scaleX(0.833);transform-origin:0 0;">STEP</div>
<div class="t" style="left:461.5px;top:291.35px;font-size:11.4px;color:#303030;transform:scaleX(0.893);transform-origin:0 0;width:55.67px;overflow:hidden;">MATERIAL</div>
<div class="t" style="left:788.3px;top:291.35px;font-size:11.4px;color:#303030;transform:scaleX(0.893);transform-origin:0 0;width:54.55px;overflow:hidden;">PRODUCT</div>
<svg class="i" style="left:442px;top:290px;width:13px;height:12px;color:#8e8b8c;" viewBox="0 0 13 12"><rect x="0" y="0" width="13" height="12" rx="0" /></svg>
<svg class="i" style="left:767px;top:290px;width:15.8px;height:11.8px;color:#a39399;" viewBox="0 0 17.3 13.2"><path d="M0.5 4.5 H16.8 V8.8 H0.5Z M4.7 8.8 V0.5 H8.7 V8.8 M8.7 8.8 V12.7 H12.8 V4.5" fill="none" stroke="currentColor" stroke-width="0.9" /></svg>
<svg class="i" style="left:849px;top:290px;width:14.4px;height:12.8px;color:#8c8c8c;" viewBox="0 0 16.5 14.5"><circle cx="3.2" cy="11.4" r="3.1" /><circle cx="13.4" cy="11.4" r="3.1" /><path d="M1.8 6 C3.6 2.6 8.2 0.6 12.6 3.8" fill="none" stroke="currentColor" stroke-width="2.3" /><path d="M15.5 0.2 V6 H8.7 L12.6 4.4Z" /></svg>
<svg class="i" style="left:931.5px;top:289.7px;width:12.5px;height:12.4px;color:#8c8c8c;" viewBox="0 0 14 14"><circle cx="7" cy="7" r="7" /></svg>
<svg class="i" style="left:1265.9px;top:291.9px;width:9.4px;height:9px;color:#2b212b;" viewBox="0 0 9.4 9"><rect x="0" y="0" width="5.6" height="5.4" rx="0" /><rect x="2.6" y="2.4" width="6.8" height="6.6" rx="0" stroke="#ededed" stroke-width="0.7"/><rect x="4.6" y="4.6" width="3" height="2.6" rx="0" fill="#6a5f6a"/></svg>
<div class="a" style="left:321px;top:323px;width:19px;height:20px;background:#fff;border:1px solid #1f76b0"></div>
<div class="t" style="left:357.4px;top:325.88px;font-size:14.2px;color:#222;transform:scaleX(0.930);transform-origin:0 0;">1</div>
<div class="t" style="left:441px;top:325.88px;font-size:14.2px;color:#1f76b0;transform:scaleX(0.882);transform-origin:0 0;">MAT_02</div>
<div class="t" style="left:602.1px;top:325.88px;font-size:14.2px;color:#222;transform:scaleX(0.923);transform-origin:0 0;">22,000</div>
<div class="t" style="left:684px;top:325.88px;font-size:14.2px;color:#222;transform:scaleX(0.852);transform-origin:0 0;">Kg</div>
<div class="t" style="left:768.1px;top:325.88px;font-size:14.2px;color:#1f76b0;transform:scaleX(0.907);transform-origin:0 0;">Belgas [A]</div>
<div class="t" style="left:930px;top:325.88px;font-size:14.2px;color:#1f76b0;transform:scaleX(0.897);transform-origin:0 0;">SMT Step</div>
<div class="t" style="left:849px;top:325.88px;font-size:14.2px;color:#1f76b0;transform:scaleX(0.897);transform-origin:0 0;width:77.26px;overflow:hidden;">SMT Product</div>
<div class="t" style="left:1010.3px;top:325.88px;font-size:14.2px;color:#222;transform:scaleX(0.930);transform-origin:0 0;">5</div>
<svg class="i" style="left:1094px;top:324.9px;width:16px;height:16px;color:#0f66a6;" viewBox="0 0 16 16"><rect x="0" y="0" width="16" height="16" rx="0" /><path d="M4 2.6 H12 V4.2 H11.2 C11.2 6 9.6 7 9.2 8 C9.6 9 11.2 10 11.2 11.8 H12 V13.4 H4 V11.8 H4.8 C4.8 10 6.4 9 6.8 8 C6.4 7 4.8 6 4.8 4.2 H4Z" fill="#fff"/><path d="M6.2 4.4 H9.8 C9.6 5.6 8.4 6.4 8 7 C7.6 6.4 6.4 5.6 6.2 4.4Z M6.2 11.8 C6.4 10.8 7.4 10.2 8 9.4 C8.6 10.2 9.6 10.8 9.8 11.8Z" /></svg>
<div class="t" style="left:1111.8px;top:325.88px;font-size:14.2px;color:#222;transform:scaleX(0.946);transform-origin:0 0;">Queued</div>
<svg class="i" style="left:1176.8px;top:323px;width:13.2px;height:13.4px;color:#868686;" viewBox="0 0 14 14"><path d="M1 1 L13 13 M13 1 L1 13" fill="none" stroke="currentColor" stroke-width="3" /></svg>
<div class="a" style="left:321px;top:358px;width:19px;height:20px;background:#fff;border:1px solid #1f76b0"></div>
<div class="t" style="left:356.8px;top:360.98px;font-size:14.2px;color:#222;transform:scaleX(0.930);transform-origin:0 0;">2</div>
<div class="t" style="left:441px;top:360.98px;font-size:14.2px;color:#1f76b0;transform:scaleX(0.882);transform-origin:0 0;">MAT_03</div>
<div class="t" style="left:602.1px;top:360.98px;font-size:14.2px;color:#222;transform:scaleX(0.923);transform-origin:0 0;">22,000</div>
<div class="t" style="left:684px;top:360.98px;font-size:14.2px;color:#222;transform:scaleX(0.852);transform-origin:0 0;">Kg</div>
<div class="t" style="left:768.1px;top:360.98px;font-size:14.2px;color:#1f76b0;transform:scaleX(0.907);transform-origin:0 0;">Belgas [A]</div>
<div class="t" style="left:930px;top:360.98px;font-size:14.2px;color:#1f76b0;transform:scaleX(0.897);transform-origin:0 0;">SMT Step</div>
<div class="t" style="left:849px;top:360.98px;font-size:14.2px;color:#1f76b0;transform:scaleX(0.897);transform-origin:0 0;width:77.26px;overflow:hidden;">SMT Product</div>
<div class="t" style="left:1010.3px;top:360.98px;font-size:14.2px;color:#222;transform:scaleX(0.930);transform-origin:0 0;">5</div>
<svg class="i" style="left:1094px;top:360px;width:16px;height:16px;color:#0f66a6;" viewBox="0 0 16 16"><rect x="0" y="0" width="16" height="16" rx="0" /><path d="M4 2.6 H12 V4.2 H11.2 C11.2 6 9.6 7 9.2 8 C9.6 9 11.2 10 11.2 11.8 H12 V13.4 H4 V11.8 H4.8 C4.8 10 6.4 9 6.8 8 C6.4 7 4.8 6 4.8 4.2 H4Z" fill="#fff"/><path d="M6.2 4.4 H9.8 C9.6 5.6 8.4 6.4 8 7 C7.6 6.4 6.4 5.6 6.2 4.4Z M6.2 11.8 C6.4 10.8 7.4 10.2 8 9.4 C8.6 10.2 9.6 10.8 9.8 11.8Z" /></svg>
<div class="t" style="left:1111.8px;top:360.98px;font-size:14.2px;color:#222;transform:scaleX(0.946);transform-origin:0 0;">Queued</div>
<svg class="i" style="left:1176.8px;top:358.1px;width:13.2px;height:13.4px;color:#868686;" viewBox="0 0 14 14"><path d="M1 1 L13 13 M13 1 L1 13" fill="none" stroke="currentColor" stroke-width="3" /></svg>
<div class="a" style="left:321px;top:394px;width:19px;height:20px;background:#fff;border:1px solid #1f76b0"></div>
<div class="t" style="left:356.8px;top:396.08px;font-size:14.2px;color:#222;transform:scaleX(0.930);transform-origin:0 0;">3</div>
<div class="t" style="left:441px;top:396.08px;font-size:14.2px;color:#1f76b0;transform:scaleX(0.882);transform-origin:0 0;">MAT_04</div>
<div class="t" style="left:602.1px;top:396.08px;font-size:14.2px;color:#222;transform:scaleX(0.923);transform-origin:0 0;">22,000</div>
<div class="t" style="left:684px;top:396.08px;font-size:14.2px;color:#222;transform:scaleX(0.852);transform-origin:0 0;">Kg</div>
<div class="t" style="left:767.6px;top:396.08px;font-size:14.2px;color:#1f76b0;transform:scaleX(0.900);transform-origin:0 0;width:77.44px;overflow:hidden;">Acetylsalicylic</div>
<div class="t" style="left:930px;top:396.08px;font-size:14.2px;color:#1f76b0;transform:scaleX(0.897);transform-origin:0 0;">SMT Step</div>
<div class="t" style="left:849px;top:396.08px;font-size:14.2px;color:#1f76b0;transform:scaleX(0.897);transform-origin:0 0;width:77.26px;overflow:hidden;">SMT Product</div>
<div class="t" style="left:1010.3px;top:396.08px;font-size:14.2px;color:#222;transform:scaleX(0.930);transform-origin:0 0;">5</div>
<svg class="i" style="left:1094px;top:395.1px;width:16px;height:16px;color:#0f66a6;" viewBox="0 0 16 16"><rect x="0" y="0" width="16" height="16" rx="0" /><path d="M4 2.6 H12 V4.2 H11.2 C11.2 6 9.6 7 9.2 8 C9.6 9 11.2 10 11.2 11.8 H12 V13.4 H4 V11.8 H4.8 C4.8 10 6.4 9 6.8 8 C6.4 7 4.8 6 4.8 4.2 H4Z" fill="#fff"/><path d="M6.2 4.4 H9.8 C9.6 5.6 8.4 6.4 8 7 C7.6 6.4 6.4 5.6 6.2 4.4Z M6.2 11.8 C6.4 10.8 7.4 10.2 8 9.4 C8.6 10.2 9.6 10.8 9.8 11.8Z" /></svg>
<div class="t" style="left:1111.8px;top:396.08px;font-size:14.2px;color:#222;transform:scaleX(0.946);transform-origin:0 0;">Queued</div>
<svg class="i" style="left:1176.8px;top:393.2px;width:13.2px;height:13.4px;color:#868686;" viewBox="0 0 14 14"><path d="M1 1 L13 13 M13 1 L1 13" fill="none" stroke="currentColor" stroke-width="3" /></svg>
<div class="a" style="left:321px;top:429px;width:19px;height:20px;background:#fff;border:1px solid #1f76b0"></div>
<div class="t" style="left:356.8px;top:431.18px;font-size:14.2px;color:#222;transform:scaleX(0.930);transform-origin:0 0;">4</div>
<div class="t" style="left:441px;top:431.18px;font-size:14.2px;color:#1f76b0;transform:scaleX(0.882);transform-origin:0 0;">MAT_05</div>
<div class="t" style="left:602.1px;top:431.18px;font-size:14.2px;color:#222;transform:scaleX(0.923);transform-origin:0 0;">22,000</div>
<div class="t" style="left:684px;top:431.18px;font-size:14.2px;color:#222;transform:scaleX(0.852);transform-origin:0 0;">Kg</div>
<div class="t" style="left:767.6px;top:431.18px;font-size:14.2px;color:#1f76b0;transform:scaleX(0.900);transform-origin:0 0;width:77.44px;overflow:hidden;">Acetylsalicylic</div>
<div class="t" style="left:930px;top:431.18px;font-size:14.2px;color:#1f76b0;transform:scaleX(0.897);transform-origin:0 0;">SMT Step</div>
<div class="t" style="left:849px;top:431.18px;font-size:14.2px;color:#1f76b0;transform:scaleX(0.897);transform-origin:0 0;width:77.26px;overflow:hidden;">SMT Product</div>
<div class="t" style="left:1010.3px;top:431.18px;font-size:14.2px;color:#222;transform:scaleX(0.930);transform-origin:0 0;">5</div>
<svg class="i" style="left:1094px;top:430.2px;width:16px;height:16px;color:#0f66a6;" viewBox="0 0 16 16"><rect x="0" y="0" width="16" height="16" rx="0" /><path d="M4 2.6 H12 V4.2 H11.2 C11.2 6 9.6 7 9.2 8 C9.6 9 11.2 10 11.2 11.8 H12 V13.4 H4 V11.8 H4.8 C4.8 10 6.4 9 6.8 8 C6.4 7 4.8 6 4.8 4.2 H4Z" fill="#fff"/><path d="M6.2 4.4 H9.8 C9.6 5.6 8.4 6.4 8 7 C7.6 6.4 6.4 5.6 6.2 4.4Z M6.2 11.8 C6.4 10.8 7.4 10.2 8 9.4 C8.6 10.2 9.6 10.8 9.8 11.8Z" /></svg>
<div class="t" style="left:1111.8px;top:431.18px;font-size:14.2px;color:#222;transform:scaleX(0.946);transform-origin:0 0;">Queued</div>
<svg class="i" style="left:1176.8px;top:428.3px;width:13.2px;height:13.4px;color:#868686;" viewBox="0 0 14 14"><path d="M1 1 L13 13 M13 1 L1 13" fill="none" stroke="currentColor" stroke-width="3" /></svg>
<div class="a" style="left:321px;top:464px;width:19px;height:20px;background:#fff;border:1px solid #1f76b0"></div>
<div class="t" style="left:356.8px;top:466.38px;font-size:14.2px;color:#222;transform:scaleX(0.930);transform-origin:0 0;">5</div>
<div class="t" style="left:441px;top:466.38px;font-size:14.2px;color:#1f76b0;transform:scaleX(0.882);transform-origin:0 0;">MAT_06</div>
<div class="t" style="left:602.1px;top:466.38px;font-size:14.2px;color:#222;transform:scaleX(0.923);transform-origin:0 0;">22,000</div>
<div class="t" style="left:684px;top:466.38px;font-size:14.2px;color:#222;transform:scaleX(0.852);transform-origin:0 0;">Kg</div>
<div class="t" style="left:767.6px;top:466.38px;font-size:14.2px;color:#1f76b0;transform:scaleX(0.900);transform-origin:0 0;width:77.44px;overflow:hidden;">Acetylsalicylic</div>
<div class="t" style="left:930px;top:466.38px;font-size:14.2px;color:#1f76b0;transform:scaleX(0.897);transform-origin:0 0;">SMT Step</div>
<div class="t" style="left:849px;top:466.38px;font-size:14.2px;color:#1f76b0;transform:scaleX(0.897);transform-origin:0 0;width:77.26px;overflow:hidden;">SMT Product</div>
<div class="t" style="left:1010.3px;top:466.38px;font-size:14.2px;color:#222;transform:scaleX(0.930);transform-origin:0 0;">5</div>
<svg class="i" style="left:1094px;top:465.4px;width:16px;height:16px;color:#0f66a6;" viewBox="0 0 16 16"><rect x="0" y="0" width="16" height="16" rx="0" /><path d="M4 2.6 H12 V4.2 H11.2 C11.2 6 9.6 7 9.2 8 C9.6 9 11.2 10 11.2 11.8 H12 V13.4 H4 V11.8 H4.8 C4.8 10 6.4 9 6.8 8 C6.4 7 4.8 6 4.8 4.2 H4Z" fill="#fff"/><path d="M6.2 4.4 H9.8 C9.6 5.6 8.4 6.4 8 7 C7.6 6.4 6.4 5.6 6.2 4.4Z M6.2 11.8 C6.4 10.8 7.4 10.2 8 9.4 C8.6 10.2 9.6 10.8 9.8 11.8Z" /></svg>
<div class="t" style="left:1111.8px;top:466.38px;font-size:14.2px;color:#222;transform:scaleX(0.946);transform-origin:0 0;">Queued</div>
<svg class="i" style="left:1176.8px;top:463.5px;width:13.2px;height:13.4px;color:#868686;" viewBox="0 0 14 14"><path d="M1 1 L13 13 M13 1 L1 13" fill="none" stroke="currentColor" stroke-width="3" /></svg>
<div class="a" style="left:321px;top:499px;width:19px;height:20px;background:#1b6fab;"></div>
<svg class="i" style="left:323.4px;top:503.2px;width:14.2px;height:12px;color:#fff;" viewBox="0 0 14 12"><path d="M1.4 6.2 L5.2 9.9 L12.8 1.8" fill="none" stroke="currentColor" stroke-width="3" /></svg>
<div class="t" style="left:356.8px;top:501.48px;font-size:14.2px;color:#222;transform:scaleX(0.930);transform-origin:0 0;">6</div>
<div class="t" style="left:441px;top:501.48px;font-size:14.2px;color:#1f76b0;transform:scaleX(0.882);transform-origin:0 0;">MAT_07</div>
<div class="t" style="left:602.1px;top:501.48px;font-size:14.2px;color:#222;transform:scaleX(0.923);transform-origin:0 0;">22,000</div>
<div class="t" style="left:684px;top:501.48px;font-size:14.2px;color:#222;transform:scaleX(0.852);transform-origin:0 0;">Kg</div>
<div class="t" style="left:767.6px;top:501.48px;font-size:14.2px;color:#1f76b0;transform:scaleX(0.915);transform-origin:0 0;width:76.17px;overflow:hidden;">SMT Prod-01</div>
<div class="t" style="left:930px;top:501.48px;font-size:14.2px;color:#1f76b0;transform:scaleX(0.897);transform-origin:0 0;">SMT Step</div>
<div class="t" style="left:849px;top:501.48px;font-size:14.2px;color:#1f76b0;transform:scaleX(0.897);transform-origin:0 0;width:77.26px;overflow:hidden;">SMT Product</div>
<div class="t" style="left:1010.3px;top:501.48px;font-size:14.2px;color:#222;transform:scaleX(0.930);transform-origin:0 0;">5</div>
<svg class="i" style="left:1094px;top:500.5px;width:16px;height:16px;color:#0f66a6;" viewBox="0 0 16 16"><rect x="0" y="0" width="16" height="16" rx="0" /><path d="M4 2.6 H12 V4.2 H11.2 C11.2 6 9.6 7 9.2 8 C9.6 9 11.2 10 11.2 11.8 H12 V13.4 H4 V11.8 H4.8 C4.8 10 6.4 9 6.8 8 C6.4 7 4.8 6 4.8 4.2 H4Z" fill="#fff"/><path d="M6.2 4.4 H9.8 C9.6 5.6 8.4 6.4 8 7 C7.6 6.4 6.4 5.6 6.2 4.4Z M6.2 11.8 C6.4 10.8 7.4 10.2 8 9.4 C8.6 10.2 9.6 10.8 9.8 11.8Z" /></svg>
<div class="t" style="left:1111.8px;top:501.48px;font-size:14.2px;color:#222;transform:scaleX(0.946);transform-origin:0 0;">Queued</div>
<svg class="i" style="left:1176.8px;top:498.6px;width:13.2px;height:13.4px;color:#868686;" viewBox="0 0 14 14"><path d="M1 1 L13 13 M13 1 L1 13" fill="none" stroke="currentColor" stroke-width="3" /></svg>
<div class="a" style="left:1309px;top:162.5px;width:358px;height:484px;background:#f4f4f4;"></div>
<div class="a" style="left:1308.6px;top:162.5px;width:1.4px;height:484px;background:#dedede;"></div>
<div class="a" style="left:1665px;top:162.5px;width:2px;height:484px;background:#f8f8f8;"></div>
<div class="t" style="left:1318.7px;top:181.08px;font-size:12.9px;color:#2c2c2c;transform:scaleX(0.860);transform-origin:0 0;">DETAILS</div>
<svg class="i" style="left:1597px;top:178px;width:16.2px;height:16px;color:#0f66a6;" viewBox="0 0 16 16"><path d="M13.31 5.92 L15.85 6.44 L15.85 9.56 L13.31 10.08 L13.22 10.28 L14.65 12.44 L12.44 14.65 L10.28 13.22 L10.08 13.31 L9.56 15.85 L6.44 15.85 L5.92 13.31 L5.72 13.22 L3.56 14.65 L1.35 12.44 L2.78 10.28 L2.69 10.08 L0.15 9.56 L0.15 6.44 L2.69 5.92 L2.78 5.72 L1.35 3.56 L3.56 1.35 L5.72 2.78 L5.92 2.69 L6.44 0.15 L9.56 0.15 L10.08 2.69 L10.28 2.78 L12.44 1.35 L14.65 3.56 L13.22 5.72Z M5.10 8.00 a2.9 2.9 0 1 0 5.8 0 a2.9 2.9 0 1 0 -5.8 0Z" fill-rule="evenodd"/></svg>
<svg class="i" style="left:1638px;top:179.5px;width:14px;height:13.1px;color:#1f76b0;" viewBox="0 0 14 13"><rect x="0.5" y="0.5" width="13" height="12" rx="0" fill="#fff" stroke="currentColor" stroke-width="1"/><rect x="11" y="0" width="3" height="13" rx="0" /><path d="M2.6 6.5 H9 M6.2 3.6 L9.1 6.5 L6.2 9.4" fill="none" stroke="currentColor" stroke-width="1" /></svg>
<svg class="i" style="left:1319.8px;top:231.8px;width:12.1px;height:5.6px;color:#1a7fc4;" viewBox="0 0 12 6"><path d="M0.3 0.4 L6 5.4 L11.7 0.4" fill="none" stroke="currentColor" stroke-width="1.2" /></svg>
<div class="t" style="left:1341.4px;top:229.03px;font-size:12.6px;color:#2c2c2c;transform:scaleX(0.927);transform-origin:0 0;">HOLDS/OFF-FLOWS <span style="color:#2d3b49">(0)</span></div>
<div class="a" style="left:1310px;top:259px;width:355px;height:28px;background:#e9e9e9;"></div>
<svg class="i" style="left:1319.8px;top:307.8px;width:12.1px;height:5.6px;color:#1a7fc4;" viewBox="0 0 12 6"><path d="M0.3 0.4 L6 5.4 L11.7 0.4" fill="none" stroke="currentColor" stroke-width="1.2" /></svg>
<div class="t" style="left:1341.4px;top:305.03px;font-size:12.6px;color:#2c2c2c;transform:scaleX(0.908);transform-origin:0 0;">PROTOCOL INSTANCES <span style="color:#2d3b49">(0)</span></div>
<div class="a" style="left:1310px;top:335px;width:355px;height:28px;background:#e9e9e9;"></div>
<svg class="i" style="left:1319.8px;top:383.8px;width:12.1px;height:5.6px;color:#1a7fc4;" viewBox="0 0 12 6"><path d="M0.3 0.4 L6 5.4 L11.7 0.4" fill="none" stroke="currentColor" stroke-width="1.2" /></svg>
<div class="t" style="left:1341.4px;top:381.03px;font-size:12.6px;color:#2c2c2c;transform:scaleX(0.934);transform-origin:0 0;">DOCUMENTS <span style="color:#6d7c89">(1)</span></div>
<div class="a" style="left:1310px;top:411px;width:355px;height:56px;background:#e9e9e9;"></div>
<svg class="i" style="left:1316.9px;top:421.9px;width:14.4px;height:15.8px;color:#0c62a4;" viewBox="0 0 14.4 15.8"><rect x="0" y="0" width="2" height="15.8" rx="0" /><rect x="3.2" y="0" width="11.2" height="15.8" rx="0" /><rect x="5.4" y="3.1" width="7" height="1.9" rx="0" fill="#fff"/><rect x="5.9" y="7.2" width="5.9" height="1.7" rx="0" fill="#fff"/></svg>
<div class="t" style="left:1335.8px;top:423.05px;font-size:14px;color:#1c7dc0;transform:scaleX(0.976);transform-origin:0 0;">Instructions Handling Hazardous Materials [A]</div>
<div class="t" style="left:1314.4px;top:442.55px;font-size:14px;color:#1e1e1e;transform:scaleX(0.988);transform-origin:0 0;">InstructionsHandlingHazardousMaterials.pdf</div>
<div class="a" style="left:1068px;top:107.5px;width:144.2px;height:136.7px;background:#fff;box-shadow:0 1px 4px rgba(0,0,0,.38)"></div>
<div class="a" style="left:1068px;top:156px;width:144.2px;height:40px;background:#cae1f2;"></div>
<div class="t" style="left:1083.9px;top:128.8px;font-size:14.3px;color:#1e1e1e;transform:scaleX(0.925);transform-origin:0 0;">Begin Setup</div>
<div class="t" style="left:1083.9px;top:168.8px;font-size:14.3px;color:#1e1e1e;transform:scaleX(0.924);transform-origin:0 0;">Begin Line Setup</div>
<div class="t" style="left:1083.9px;top:208.8px;font-size:14.3px;color:#1e1e1e;transform:scaleX(0.917);transform-origin:0 0;">Begin Pre Setup</div>
</body></html>
